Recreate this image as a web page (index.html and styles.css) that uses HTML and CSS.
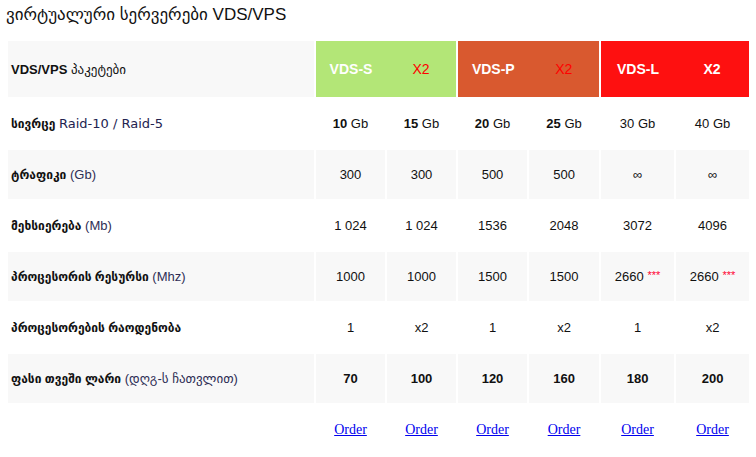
FILE: index.html
```html
<!DOCTYPE html>
<html lang="ka">
<head>
    <meta charset="UTF-8">
    <meta name="viewport" content="width=device-width, initial-scale=1.0">
    <title>VDS/VPS</title>
    <link rel="stylesheet" href="styles.css">
</head>
<body>
    <div class="page">
        <h1 class="title">ვირტუალური სერვერები VDS/VPS</h1>

        <table class="plans">
            <colgroup>
                <col class="col-label">
                <col class="col-a"><col class="col-a"><col class="col-a">
                <col class="col-b">
                <col class="col-c"><col class="col-c">
            </colgroup>
            <tr class="head gray">
                <th class="label"><b>VDS/VPS</b> პაკეტები</th>
                <th colspan="2" class="pkg green">
                    <div class="pair"><span class="name">VDS-S</span><span class="x2">X2</span></div>
                </th>
                <th colspan="2" class="pkg orange">
                    <div class="pair"><span class="name">VDS-P</span><span class="x2">X2</span></div>
                </th>
                <th colspan="2" class="pkg red">
                    <div class="pair"><span class="name">VDS-L</span><span class="x2 light">X2</span></div>
                </th>
            </tr>
            <tr>
                <td class="label"><b class="ka">სივრცე</b> <span class="raid">Raid-10 / Raid-5</span></td>
                <td><b>10</b> Gb</td>
                <td><b>15</b> Gb</td>
                <td><b>20</b> Gb</td>
                <td><b>25</b> Gb</td>
                <td>30 Gb</td>
                <td>40 Gb</td>
            </tr>
            <tr class="gray">
                <td class="label"><b class="ka">ტრაფიკი</b> <span class="unit">(Gb)</span></td>
                <td>300</td>
                <td>300</td>
                <td>500</td>
                <td>500</td>
                <td>∞</td>
                <td>∞</td>
            </tr>
            <tr>
                <td class="label"><b class="ka">მეხსიერება</b> <span class="unit">(Mb)</span></td>
                <td>1 024</td>
                <td>1 024</td>
                <td>1536</td>
                <td>2048</td>
                <td>3072</td>
                <td>4096</td>
            </tr>
            <tr class="gray">
                <td class="label"><b class="ka">პროცესორის რესურსი</b> <span class="unit">(Mhz)</span></td>
                <td>1000</td>
                <td>1000</td>
                <td>1500</td>
                <td>1500</td>
                <td>2660 <span class="star">***</span></td>
                <td>2660 <span class="star">***</span></td>
            </tr>
            <tr>
                <td class="label"><b class="ka">პროცესორების რაოდენობა</b></td>
                <td>1</td>
                <td>x2</td>
                <td>1</td>
                <td>x2</td>
                <td>1</td>
                <td>x2</td>
            </tr>
            <tr class="gray price">
                <td class="label"><b class="ka">ფასი თვეში ლარი</b> <span class="unit">(დღგ-ს ჩათვლით)</span></td>
                <td>70</td>
                <td>100</td>
                <td>120</td>
                <td>160</td>
                <td>180</td>
                <td>200</td>
            </tr>
            <tr class="order">
                <td class="label"></td>
                <td><a href="#">Order</a></td>
                <td><a href="#">Order</a></td>
                <td><a href="#">Order</a></td>
                <td><a href="#">Order</a></td>
                <td><a href="#">Order</a></td>
                <td><a href="#">Order</a></td>
            </tr>
        </table>
    </div>
</body>
</html>
```

FILE: styles.css
```css
body {
    margin: 0;
    background-color: #fff;
    font-family: "Liberation Sans", "DejaVu Sans", sans-serif;
    color: #111;
}

.page {
    padding: 4px 5px 0 6px;
}

.title {
    margin: 0;
    font-size: 17px;
    font-weight: normal;
    line-height: 22px;
    color: #111;
}

.plans {
    margin-top: 13px;
    border-collapse: separate;
    border-spacing: 2px;
    table-layout: fixed;
    width: 745px;
    font-size: 13px;
}

.col-label { width: 306px; }
.col-a { width: 69px; }
.col-b { width: 70px; }
.col-c { width: 73px; }

.plans td, .plans th {
    height: 49px;
    padding: 0;
    text-align: center;
    vertical-align: middle;
}

.plans .head th {
    height: 56px;
}

.plans .label {
    text-align: left;
    padding-left: 3px;
    font-weight: normal;
}

.label .ka {
    font-size: 12px;
}

.gray td, .gray th.label {
    background-color: #f8f8f8;
}

.pkg {
    color: #fff;
    font-size: 14px;
}

.pkg.green { background-color: #b3e677; }
.pkg.orange { background-color: #d9592f; }
.pkg.red { background-color: #fe1010; }

.pair {
    display: flex;
}

.pair span {
    flex: 1;
    text-align: center;
}

.pair .name {
    font-weight: bold;
}

.pair .x2 {
    font-weight: normal;
    color: #ff0000;
}

.pair .x2.light {
    color: #fff;
    font-weight: bold;
}

.raid {
    font-family: "DejaVu Sans", sans-serif;
    font-size: 13px;
    color: #232350;
}

.unit {
    color: #2e2e55;
}

.star {
    color: #ff0033;
    font-size: 11px;
    vertical-align: top;
}

.price td {
    font-weight: bold;
}

.price td.label {
    font-weight: normal;
}

.order a {
    font-family: "Liberation Serif", serif;
    font-size: 14px;
    color: #0000ee;
}
```
